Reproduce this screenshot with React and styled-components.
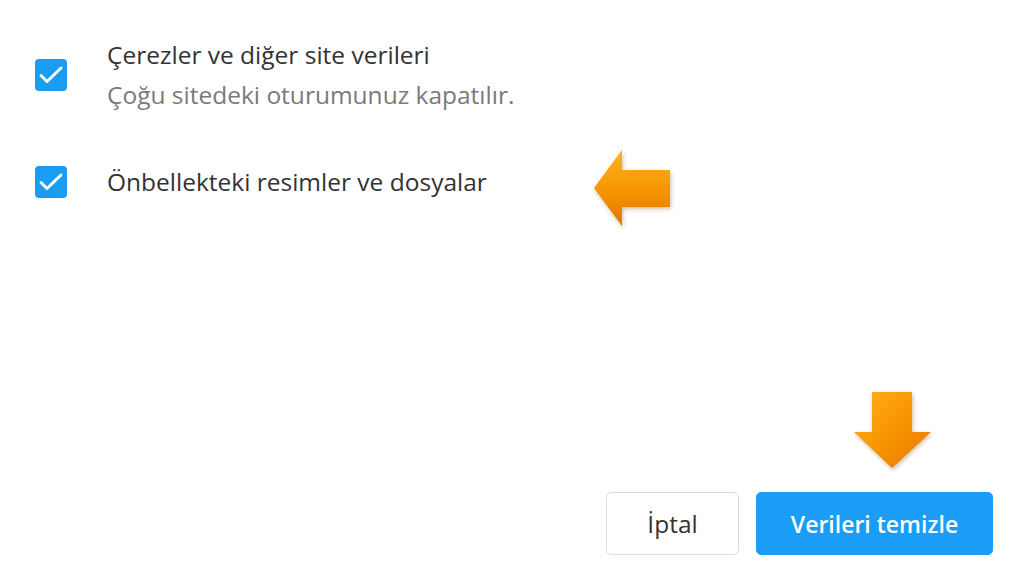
import styled, { createGlobalStyle } from "styled-components";

const GlobalStyle = createGlobalStyle`
  html, body {
    margin: 0;
    padding: 0;
    background: #ffffff;
  }
  body {
    font-family: "Open Sans", "Noto Sans", "Liberation Sans", sans-serif;
  }
`;

const options = [
  {
    title: "Çerezler ve diğer site verileri",
    note: "Çoğu sitedeki oturumunuz kapatılır.",
  },
  { title: "Önbellekteki resimler ve dosyalar" },
];

const CheckIcon = () => (
  <svg width="32" height="32" viewBox="0 0 32 32" fill="none">
    <path
      d="M6 16.5l6 6L26 9"
      stroke="#ffffff"
      strokeWidth="3"
      strokeLinecap="round"
      strokeLinejoin="round"
    />
  </svg>
);

const LeftArrow = () => (
  <svg width="80" height="80" viewBox="0 0 80 80">
    <defs>
      <linearGradient id="leftGrad" x1="0" y1="0" x2="0" y2="1">
        <stop offset="0" stopColor="#ffb31f" />
        <stop offset="0.55" stopColor="#f59400" />
        <stop offset="1" stopColor="#e57400" />
      </linearGradient>
    </defs>
    <polygon
      points="2,40 30,2 30,22 78,22 78,59 30,59 30,78"
      fill="url(#leftGrad)"
    />
  </svg>
);

const DownArrow = () => (
  <svg width="80" height="80" viewBox="0 0 80 80">
    <defs>
      <linearGradient id="downGrad" x1="0" y1="0" x2="1" y2="1">
        <stop offset="0" stopColor="#ffb01c" />
        <stop offset="0.5" stopColor="#f79600" />
        <stop offset="1" stopColor="#e67600" />
      </linearGradient>
    </defs>
    <polygon
      points="19,2 59,2 59,42 78,42 39,78 1,42 19,42"
      fill="url(#downGrad)"
    />
  </svg>
);

const App = () => {
  const OptionList = options.map((data, idx) => (
    <Option key={idx}>
      <Checkbox>
        <CheckIcon />
      </Checkbox>
      <Label>
        <Title>{data.title}</Title>
        {data.note && <Note>{data.note}</Note>}
      </Label>
    </Option>
  ));

  return (
    <>
      <GlobalStyle />
      <Page>
        <Options>{OptionList}</Options>
        <Footer>
          <Button width={133}>İptal</Button>
          <Button primary width={237}>
            Verileri temizle
          </Button>
        </Footer>
        <Pointer style={{ left: 592, top: 148 }}>
          <LeftArrow />
        </Pointer>
        <Pointer style={{ left: 853, top: 390 }}>
          <DownArrow />
        </Pointer>
      </Page>
    </>
  );
};

const Page = styled.div`
  position: relative;
  width: 1024px;
  height: 576px;
  box-sizing: border-box;
  padding: 35px 31px 21px 35px;
  display: flex;
  flex-direction: column;
  justify-content: space-between;
  overflow: hidden;
`;

const Options = styled.div`
  display: flex;
  flex-direction: column;
  gap: 47px;
`;

const Option = styled.div`
  display: flex;
  align-items: center;
  gap: 40px;
`;

const Checkbox = styled.div`
  width: 32px;
  height: 32px;
  flex-shrink: 0;
  border-radius: 4px;
  background-color: #1a9cf2;
  display: flex;
  align-items: center;
  justify-content: center;
`;

const Label = styled.div`
  display: flex;
  flex-direction: column;
`;

const Title = styled.div`
  font-size: 24.5px;
  line-height: 40px;
  color: #333333;
`;

const Note = styled.div`
  font-size: 24.5px;
  line-height: 40px;
  color: #7a7a7a;
`;

const Footer = styled.div`
  display: flex;
  justify-content: flex-end;
  gap: 17px;
`;

const Button = styled.button`
  width: ${(props) => props.width}px;
  height: 63px;
  box-sizing: border-box;
  padding: 0;
  border-radius: 5px;
  font-family: "Open Sans", "Noto Sans", "Liberation Sans", sans-serif;
  font-size: ${(props) => (props.primary ? "23px" : "24.5px")};
  font-weight: ${(props) => (props.primary ? 600 : 400)};
  color: ${(props) => (props.primary ? "#ffffff" : "#333333")};
  background-color: ${(props) => (props.primary ? "#1a9cf7" : "#ffffff")};
  border: 1px solid ${(props) => (props.primary ? "#1a9cf7" : "#dcdcdc")};
  cursor: pointer;
`;

const Pointer = styled.div`
  position: absolute;
  width: 80px;
  height: 80px;
  filter: drop-shadow(1px 2px 2px rgba(120, 70, 0, 0.35));
`;

export default App;
